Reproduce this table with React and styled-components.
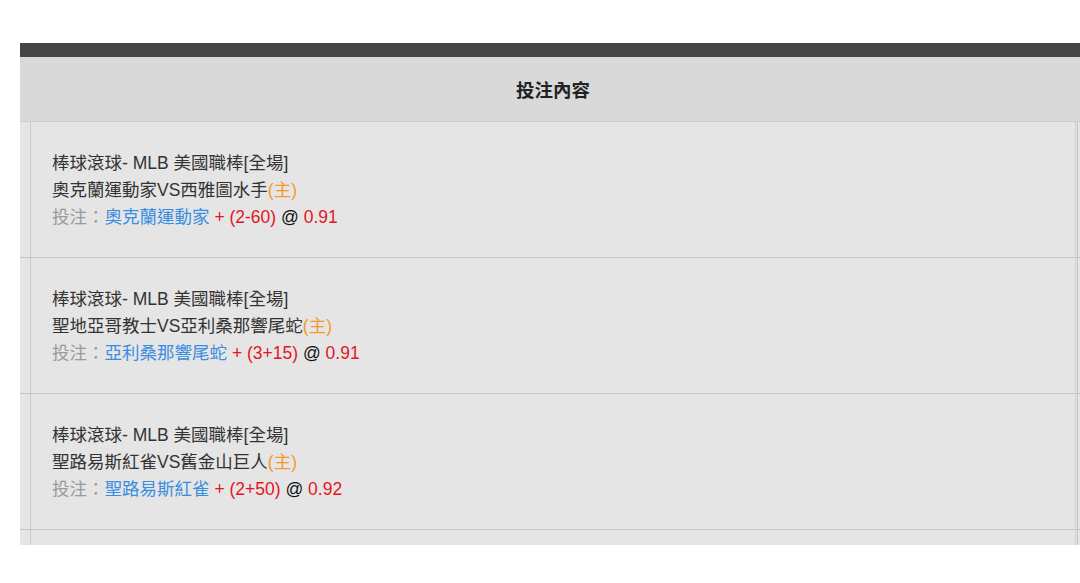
import React from "react";
import styled, { createGlobalStyle } from "styled-components";

const Global = createGlobalStyle`
  html, body { margin: 0; padding: 0; background: #fff; overflow: hidden; }
  body { font-family: "Liberation Sans", "Noto Sans CJK TC", sans-serif; }
`;

const Page = styled.div`
  padding: 43px 0 0 20px;
  width: 1080px;
  box-sizing: border-box;
`;

const Frame = styled.div`
  height: 502px;
  overflow: hidden;
  width: 1061px;
`;

const TopBar = styled.div`
  height: 14px;
  background: #454545;
`;

const Row = styled.div`
  display: grid;
  grid-template-columns: 11px 1fr 6px;
  background: ${(p) => (p.$head ? "#d9d9d9" : "#e5e5e5")};
  border-bottom: 1px solid ${(p) => (p.$head ? "#cdcdcd" : "#c6c6c6")};
`;

const Side = styled.div`
  border-right: ${(p) => (p.$line ? "1px solid #cbcbcb" : "none")};
  box-sizing: border-box;
`;

const RightSide = styled.div`
  border-left: ${(p) => (p.$line ? "1px solid #d0d0d0" : "none")};
  box-sizing: border-box;
  position: relative;
  &::after {
    content: "";
    display: ${(p) => (p.$line ? "block" : "none")};
    position: absolute;
    left: 1px;
    top: 0;
    bottom: 0;
    width: 1px;
    background: #c4c4c4;
  }
`;

const HeadCell = styled.div`
  height: 64px;
  display: flex;
  align-items: center;
  justify-content: center;
  font-size: 18.5px;
  font-weight: bold;
  color: #222;
`;

const Cell = styled.div`
  padding: 28px 21px 26px;
  font-size: 17.5px;
  line-height: 27px;
  color: #333;
  min-height: ${(p) => (p.$empty ? "60px" : "auto")};
`;

const Line = styled.div`
  white-space: nowrap;
`;

const Gray = styled.span` color: #9a9a9a; `;
const Blue = styled.span` color: #3a8ee0; `;
const Red = styled.span` color: #e4151f; `;
const Orange = styled.span` color: #f39a2c; `;
const Dark = styled.span` color: #111; `;

const bets = [
  { match: "奧克蘭運動家VS西雅圖水手", pick: "奧克蘭運動家", line: "(2-60)", odds: "0.91" },
  { match: "聖地亞哥教士VS亞利桑那響尾蛇", pick: "亞利桑那響尾蛇", line: "(3+15)", odds: "0.91" },
  { match: "聖路易斯紅雀VS舊金山巨人", pick: "聖路易斯紅雀", line: "(2+50)", odds: "0.92" },
];

export default function App() {
  return (
    <>
      <Global />
      <Page>
        <Frame>
          <TopBar />
          <Row $head>
            <Side />
            <HeadCell>投注內容</HeadCell>
            <RightSide />
          </Row>
          {bets.map((b, i) => (
            <Row key={i}>
              <Side $line />
              <Cell>
                <Line>棒球滾球- MLB 美國職棒[全場]</Line>
                <Line>
                  {b.match}
                  <Orange>(主)</Orange>
                </Line>
                <Line>
                  <Gray>投注：</Gray>
                  <Blue>{b.pick}</Blue> <Red>+ {b.line}</Red> <Dark>@</Dark>{" "}
                  <Red>{b.odds}</Red>
                </Line>
              </Cell>
              <RightSide $line />
            </Row>
          ))}
          <Row>
            <Side $line />
            <Cell $empty />
            <RightSide $line />
          </Row>
        </Frame>
      </Page>
    </>
  );
}
